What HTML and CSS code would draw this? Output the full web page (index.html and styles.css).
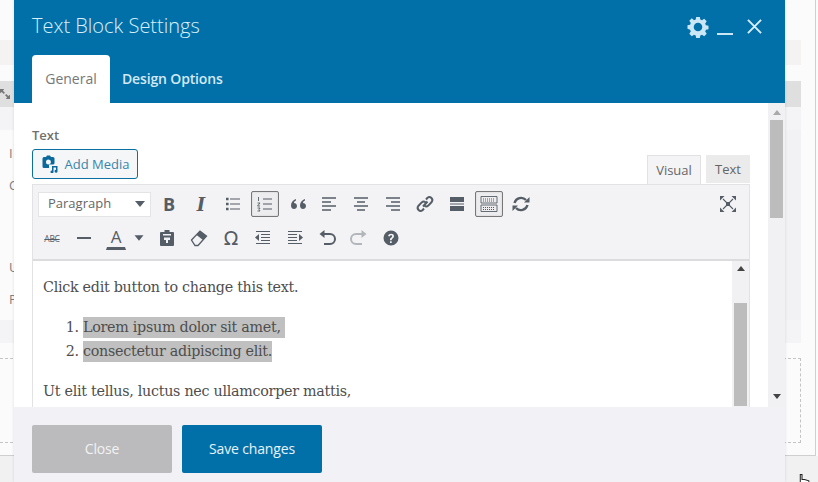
FILE: index.html
```html
<!DOCTYPE html>
<html lang="en">
<head>
<meta charset="utf-8">
<title>Text Block Settings</title>
<link rel="stylesheet" href="styles.css">
</head>
<body>
<div class="page">
  <div class="page-top"><div class="top-band"></div></div>
  <div class="card">
    <div class="card-head"><svg class="card-expand" viewBox="0 0 12 14"><path d="M0 1h5L3.500 3 6 5.500 4.500 7 2 4.500 0 6zM12 13H7l1.500-2L6 8.500 7.500 7 10 9.500l2-1.500z"/></svg></div>
    <div class="card-band"></div>
    <div class="card-row">
      <div class="card-text">
        <span class="frag l1">I</span>
        <span class="frag l2">C</span>
        <span class="frag l3">U</span>
        <span class="frag l4">P</span>
      </div>
      <div class="card-side"></div>
    </div>
    <div class="card-foot"></div>
    <div class="dropzone"></div>
  </div>
  <div class="page-bottom"></div>
</div>

<section class="modal">
  <header class="modal-head">
    <div class="title-row">
      <h1 class="title">Text Block Settings</h1>
      <div class="head-controls">
        <svg class="gear" viewBox="0 0 20 20"><path fill-rule="evenodd" d="M8.200 0h3.600l.5 2.600 1.700.7 2.200-1.500 2.500 2.500-1.500 2.200.7 1.700 2.600.5v3.600l-2.600.5-.7 1.700 1.500 2.200-2.500 2.500-2.200-1.500-1.700.7-.5 2.600H8.200l-.5-2.600-1.700-.7-2.200 1.500-2.500-2.500 1.500-2.200-.7-1.700L-.5 11.800V8.200l2.600-.5.700-1.700-1.500-2.200 2.500-2.500L6 3.300l1.700-.7zM10 5.700a4.300 4.300 0 1 0 0 8.600 4.300 4.300 0 0 0 0-8.600z"/></svg>
        <span class="minimize"></span>
        <svg class="close-x" viewBox="0 0 16 16"><path d="M1 1l14 14M15 1L1 15"/></svg>
      </div>
    </div>
    <nav class="tabs">
      <span class="tab active">General</span>
      <span class="tab">Design Options</span>
    </nav>
  </header>

  <div class="modal-body">
    <div class="form">
      <div class="label">Text</div>
      <div class="editor-top">
        <button class="add-media">
          <svg class="media-icon" viewBox="0 0 18 18"><path fill-rule="evenodd" d="M3 2h2l1-1.500h3L10 2h2a1.500 1.500 0 0 1 1.500 1.500V8a1.500 1.500 0 0 1-1.500 1.500H8V13H3a1.500 1.500 0 0 1-1.500-1.500v-8A1.500 1.500 0 0 1 3 2zm4.500 2.500a2.500 2.500 0 1 0 0 5 2.500 2.500 0 0 0 0-5z"/><path d="M11 11h5.500v5.200a1.500 1.500 0 1 1-1.500-1.400v-2.300h-2.500v4.300a1.500 1.500 0 1 1-1.500-1.400z"/></svg>
          Add Media
        </button>
        <div class="mode-tabs">
          <span class="mode active">Visual</span>
          <span class="mode">Text</span>
        </div>
      </div>
      <div class="editor">
        <div class="toolbar">
          <div class="tool-row">
            <div class="format"><span class="format-label">Paragraph</span><i class="caret"></i></div>
            <span class="btn glyph bold">B</span>
            <span class="btn glyph ital">I</span>
            <span class="btn"><svg viewBox="0 0 20 20"><path class="s1" d="M7 5h10M7 10h10M7 15h10"/><path d="M3 3.700h2.600v2.600H3zM3 8.700h2.600v2.600H3zM3 13.700h2.600v2.600H3z"/></svg></span>
            <span class="btn on"><svg viewBox="0 0 20 20"><path class="s1" d="M8 5h9M8 10h9M8 15h9"/><path class="thin" d="M3.500 3v4M2.500 9h2.500l-2.500 3H5M2.500 14H5l-1 1.500 1 1.500H2.500"/></svg></span>
            <span class="btn"><svg viewBox="0 0 20 20"><path d="M9 5c-3 1-5 3.500-5 6.500C4 14 5.500 15 7 15s3-1 3-3-1.500-3-3-3c0-1 .7-2 2-2.500zM18 5c-3 1-5 3.500-5 6.500 0 2.500 1.500 3.500 3 3.500s3-1 3-3-1.500-3-3-3c0-1 .7-2 2-2.500z"/></svg></span>
            <span class="btn"><svg viewBox="0 0 20 20"><path class="s" d="M3 4h14M3 8h9M3 12h14M3 16h9"/></svg></span>
            <span class="btn"><svg viewBox="0 0 20 20"><path class="s" d="M3 4h14M6 8h8M3 12h14M6 16h8"/></svg></span>
            <span class="btn"><svg viewBox="0 0 20 20"><path class="s" d="M3 4h14M8 8h9M3 12h14M8 16h9"/></svg></span>
            <span class="btn"><svg viewBox="0 0 20 20"><path class="s2" d="M8 12.500l4.500-5M11 5.500l1.500-1.700a3 3 0 0 1 4.200 4.200l-3.400 3.600a3 3 0 0 1-3.800.2M9 14.500l-1.500 1.700a3 3 0 0 1-4.200-4.200l3.400-3.600a3 3 0 0 1 3.800-.2"/></svg></span>
            <span class="btn"><svg viewBox="0 0 20 20"><path d="M3 3h14v5H3zM3 9.500h14v1H3zM3 12h14v5H3z"/></svg></span>
            <span class="btn on"><svg viewBox="0 0 20 20"><path class="thin" d="M2 2.500h16v6.500H2zM2 11h16v6.500H2z"/><path class="dots" d="M4 5h12M4 7h12M4 13.500h12M4 15.500h12"/></svg></span>
            <span class="btn"><svg viewBox="0 0 20 20"><path class="s3" d="M3.500 9a6.800 6.800 0 0 1 11.500-3M16.500 11a6.800 6.800 0 0 1-11.500 3"/><path d="M13 8.500h5.500V3zM7 11.500H1.500V17z"/></svg></span>
            <span class="btn end"><svg viewBox="0 0 20 20"><path d="M8 8h4v4H8z"/><path class="s1" d="M5 5l10 10M15 5L5 15"/><path d="M2 2h4.500L2 6.500zM18 2v4.500L13.500 2zM2 18v-4.500L6.500 18zM18 18h-4.500l4.500-4.500z"/></svg></span>
          </div>
          <div class="tool-row second">
            <span class="btn glyph strike">ABC</span>
            <span class="btn"><svg viewBox="0 0 20 20"><path d="M3 9h14v2H3z"/></svg></span>
            <span class="btn glyph color">A</span>
            <i class="caret color-caret"></i>
            <span class="btn"><svg viewBox="0 0 20 20"><path fill-rule="evenodd" d="M7.500 2h5v2H16a1 1 0 0 1 1 1v12a1 1 0 0 1-1 1H4a1 1 0 0 1-1-1V5a1 1 0 0 1 1-1h3.500zM6 6v1.500h8V6zM7 9.500V12h2v3h2v-3h2V9.500z"/></svg></span>
            <span class="btn"><svg viewBox="0 0 20 20"><path class="s4" d="M2.500 12l8.500-9 6.500 5-8.500 9.500H6z"/><path d="M11 3l6.500 5-3.500 4-6.500-5z"/></svg></span>
            <span class="btn glyph omega">Ω</span>
            <span class="btn"><svg viewBox="0 0 20 20"><path class="s1" d="M3 3.500h14M8 6.500h9M8 9.500h9M8 12.500h9M3 15.500h14"/><path d="M6 6v7L2 9.500z"/></svg></span>
            <span class="btn"><svg viewBox="0 0 20 20"><path class="s1" d="M3 3.500h14M3 6.500h9M3 9.500h9M3 12.500h9M3 15.500h14"/><path d="M14 6v7l4-3.500z"/></svg></span>
            <span class="btn"><svg viewBox="0 0 20 20"><path class="s2" d="M6 6h7a4.500 4.500 0 0 1 0 10H7"/><path d="M7.500 2v8L2.500 6z"/></svg></span>
            <span class="btn faded"><svg viewBox="0 0 20 20"><path class="s2" d="M14 6H7a4.500 4.500 0 0 0 0 10h6"/><path d="M12.500 2v8l5-4z"/></svg></span>
            <span class="btn"><svg viewBox="0 0 20 20"><path fill-rule="evenodd" d="M10 2.500a7.500 7.500 0 1 1 0 15 7.500 7.500 0 0 1 0-15zM9 12.200v-1c0-1.500 2.200-1.700 2.200-3 0-1.300-2.200-1.300-2.500.3l-1.600-.4C7.500 5.200 12.900 5 13 8.200c0 2-2.400 2.200-2.400 4zM9 13.200h1.700V15H9z"/></svg></span>
          </div>
        </div>
        <div class="content-wrap">
          <div class="content">
            <p>Click edit button to change this text.</p>
            <ol>
              <li><span class="sel">Lorem ipsum dolor sit amet,&nbsp;</span></li>
              <li><span class="sel">consectetur adipiscing elit.</span></li>
            </ol>
            <p>Ut elit tellus, luctus nec ullamcorper mattis,</p>
          </div>
          <div class="inner-scroll">
            <i class="arrow up dark"></i>
            <i class="inner-thumb"></i>
          </div>
        </div>
      </div>
    </div>
    <div class="outer-scroll">
      <i class="arrow up"></i>
      <i class="outer-thumb"></i>
      <i class="arrow down dark"></i>
    </div>
  </div>

  <footer class="modal-foot">
    <button class="foot-btn close">Close</button>
    <button class="foot-btn save">Save changes</button>
  </footer>
</section>

<svg class="cursor" viewBox="0 0 14 14"><path d="M1.500 0.500h2v6h3l5 1.500v6h-8l-2-4z"/></svg>
</body>
</html>
```
FILE: styles.css
```css
* { box-sizing: border-box; }
html, body { margin: 0; padding: 0; }
body {
  width: 818px;
  height: 482px;
  overflow: hidden;
  position: relative;
  background: #fbfbfc;
  font-family: "Open Sans", "Liberation Sans", sans-serif;
}

/* Page behind the dialog */
.page {
  width: 818px;
  height: 482px;
  display: flex;
  flex-direction: column;
}
.page-top { height: 81px; padding-top: 40px; margin-right: 2px; border-right: 1px solid #cfcfd2; }
.top-band { height: 25px; background: #f5f3f2; margin-right: 14px; }
.card {
  height: 375px;
  padding-right: 14px;
  margin-right: 2px;
  border-right: 1px solid #cfcfd2;
  border-bottom: 1px solid #cfcfd2;
  display: flex;
  flex-direction: column;
}
.card-head { height: 26px; background: #dfdfdf; display: flex; align-items: center; flex: none; }
.card-expand { width: 10px; height: 14px; fill: #777; }
.card-band { height: 23px; background: #f4f4f6; flex: none; }
.card-row { height: 190px; display: flex; flex: none; justify-content: space-between; }
.card-text { position: relative; flex: 1; }
.card-side { width: 16px; background: #f2f2f4; }
.frag { position: absolute; left: 9px; font-size: 13px; color: #808080; line-height: 16px; }
.l1 { top: 15px; }
.l2 { top: 47px; }
.l3 { top: 129px; }
.l4 { top: 161px; }
.card-foot { height: 23px; background: #f4f4f6; flex: none; }
.dropzone {
  height: 85px;
  margin-top: 15px;
  border-top: 1px dashed #c4c4c4;
  border-bottom: 1px dashed #c4c4c4;
  border-right: 1px dashed #c4c4c4;
  flex: none;
}
.page-bottom { flex: 1; background: #f1f1f2; }

/* Dialog */
.modal {
  position: absolute;
  left: 14px;
  top: 0;
  width: 771px;
  height: 482px;
  display: flex;
  flex-direction: column;
  background: #fff;
  box-shadow: 0 0 3px rgba(0, 0, 0, .12);
}
.modal-head {
  height: 103px;
  flex: none;
  background: #0270a8;
  padding: 0 18px;
  display: flex;
  flex-direction: column;
}
.title-row { height: 55px; display: flex; justify-content: space-between; align-items: flex-start; }
.title { margin: 12px 0 0; font-size: 20px; line-height: 28px; font-weight: 300; letter-spacing: 0; color: #d8f0fb; }
.head-controls { display: flex; align-items: flex-start; padding: 17px 5px 0 0; }
.gear { width: 20px; height: 20px; fill: #cbe7f6; overflow: visible; margin-right: 9px; }
.minimize { width: 16px; height: 2px; background: #cbe7f6; margin-top: 16px; margin-right: 14px; }
.close-x { width: 15px; height: 15px; margin-top: 2px; fill: none; stroke: #d9eff9; stroke-width: 2; }
.tabs { display: flex; height: 48px; }
.tab {
  display: flex;
  align-items: center;
  padding: 0 0 2px;
  margin-left: 12px;
  font-size: 14px;
  font-weight: 600;
  letter-spacing: -.15px;
  color: #d3e9f5;
}
.tab.active {
  width: 78px;
  margin-left: 0;
  justify-content: center;
  background: #fff;
  color: #777;
  font-weight: 400;
  letter-spacing: 0;
  border-radius: 4px 4px 0 0;
}

.modal-body { height: 304px; flex: none; display: flex; overflow: hidden; }
.form { width: 754px; flex: none; padding: 24px 0 0 18px; }
.label { font-size: 13px; line-height: 16px; font-weight: 600; color: #707070; }
.editor-top { display: flex; width: 718px; justify-content: space-between; align-items: flex-end; margin-top: 6px; height: 35px; }
.add-media {
  height: 30px;
  width: 106px;
  margin-bottom: 5px;
  padding: 0;
  display: flex;
  align-items: center;
  justify-content: center;
  gap: 6px;
  background: #f5f6f7;
  border: 1px solid #0b6f9f;
  border-radius: 3px;
  font: 400 13px "Open Sans", sans-serif;
  color: #3a84ab;
}
.media-icon { width: 18px; height: 18px; fill: #0b6a9b; }
.mode-tabs { display: flex; gap: 5px; height: 29px; }
.mode {
  width: 44px;
  height: 28px;
  display: flex;
  align-items: center;
  justify-content: center;
  font-size: 13px;
  color: #666;
  background: #ebebeb;
}
.mode.active {
  width: 54px;
  height: 29px;
  position: relative;
  z-index: 1;
  background: #f4f4f6;
  border: 1px solid #e2e2e4;
  border-bottom: 0;
}

.editor { width: 718px; border: 1px solid #e2e2e4; border-top: 0; }
.toolbar {
  height: 77px;
  background: #f3f3f5;
  border-top: 1px solid #e2e2e4;
  border-bottom: 2px solid #dcdcde;
  padding: 6px 5px 0;
  display: flex;
  flex-direction: column;
  gap: 8px;
}
.tool-row { display: flex; align-items: center; gap: 4px; height: 26px; }
.format {
  width: 113px;
  height: 25px;
  padding-left: 9px;
  display: flex;
  align-items: center;
  justify-content: space-between;
  background: #fff;
  border: 1px solid #e4e4e6;
  font-size: 13px;
  color: #666;
}
.format-label { padding-bottom: 2px; }
.format .caret { margin-right: 5px; }
.caret {
  width: 0;
  height: 0;
  border-left: 5px solid transparent;
  border-right: 5px solid transparent;
  border-top: 6px solid #555d66;
}
.btn {
  width: 28px;
  height: 26px;
  flex: none;
  display: flex;
  align-items: center;
  justify-content: center;
  border: 1px solid transparent;
  color: #555d66;
}
.btn svg { width: 20px; height: 20px; fill: #555d66; flex: none; }
.btn .s { stroke: #555d66; stroke-width: 1.600; fill: none; }
.btn .s1 { stroke: #555d66; stroke-width: 1.100; fill: none; }
.btn .s2 { stroke: #555d66; stroke-width: 2; fill: none; }
.btn .s3 { stroke: #555d66; stroke-width: 2.400; fill: none; }
.btn .s4 { stroke: #555d66; stroke-width: 1.300; fill: none; }
.btn .thin { stroke: #555d66; stroke-width: .9; fill: none; }
.btn .dots { stroke: #555d66; stroke-width: 1; stroke-dasharray: 1 1; fill: none; }
.btn.on { border-color: #777; border-radius: 2px; background: #ededef; box-shadow: inset 0 0 2px rgba(0, 0, 0, .15); }
.btn.end { margin-left: auto; margin-right: 2px; }
.btn.faded { opacity: .4; }
.glyph { line-height: 1; }
.bold { font: 700 18px "Open Sans", sans-serif; }
.ital { font: italic 700 18px "DejaVu Serif", serif; }
.strike { font: 500 8.500px "Open Sans", sans-serif; text-decoration: line-through; letter-spacing: -.3px; }
.color { font: 400 17px "Open Sans", sans-serif; padding-bottom: 2px; border-bottom: 3px solid #555d66; height: 22px; width: 20px; margin: 1px 0 0 4px; }
.color-caret { margin-left: 4px; transform: scale(.9); }
.color-caret + .btn { margin-left: 5px; }
.omega { font: 400 19px "DejaVu Sans", sans-serif; }

.content-wrap { height: 146px; display: flex; background: #fff; overflow: hidden; }
.content {
  flex: 1;
  padding: 14px 0 0 10px;
  font: 400 14.300px/24px "DejaVu Serif", serif;
  letter-spacing: -.28px;
  color: #4e4e4e;
}
.content p { margin: 0 0 16px; }
.content ol { margin: 0 0 16px; padding-left: 40px; }
.sel { background: #c0c0c0; padding: 2px 0 3px; }
.inner-scroll {
  width: 17px;
  flex: none;
  background: #f1f1f3;
  display: flex;
  flex-direction: column;
  align-items: center;
  padding-top: 5px;
}
.inner-thumb { width: 13px; height: 103px; margin-top: 32px; background: #bcbcbc; flex: none; }

.outer-scroll {
  width: 17px;
  flex: none;
  background: #f1f1f3;
  display: flex;
  flex-direction: column;
  align-items: center;
  padding-top: 7px;
}
.outer-thumb { width: 13px; height: 98px; margin-top: 5px; background: #bcbcbc; flex: none; }
.arrow { width: 0; height: 0; flex: none; border-left: 4px solid transparent; border-right: 4px solid transparent; }
.arrow.up { border-bottom: 5px solid #aaa; }
.arrow.up.dark { border-bottom-color: #444; }
.arrow.down { border-top: 5px solid #444; margin-top: 176px; }

.modal-foot {
  flex: 1;
  background: #f2f2f6;
  padding: 18px 18px 0;
  display: flex;
  gap: 10px;
  align-items: flex-start;
}
.foot-btn {
  width: 140px;
  height: 48px;
  border: 0;
  padding: 0 0 2px;
  border-radius: 2px;
  font: 400 14px "Open Sans", sans-serif;
  letter-spacing: -.15px;
}
.foot-btn.close { background: #bbbbbd; color: #f2f2f2; }
.foot-btn.save { background: #0270a8; color: #e6f3fa; }

.cursor {
  position: absolute;
  left: 799px;
  top: 474px;
  width: 12px;
  height: 12px;
  fill: #fff;
  stroke: #222;
  stroke-width: 1.200;
}
```
